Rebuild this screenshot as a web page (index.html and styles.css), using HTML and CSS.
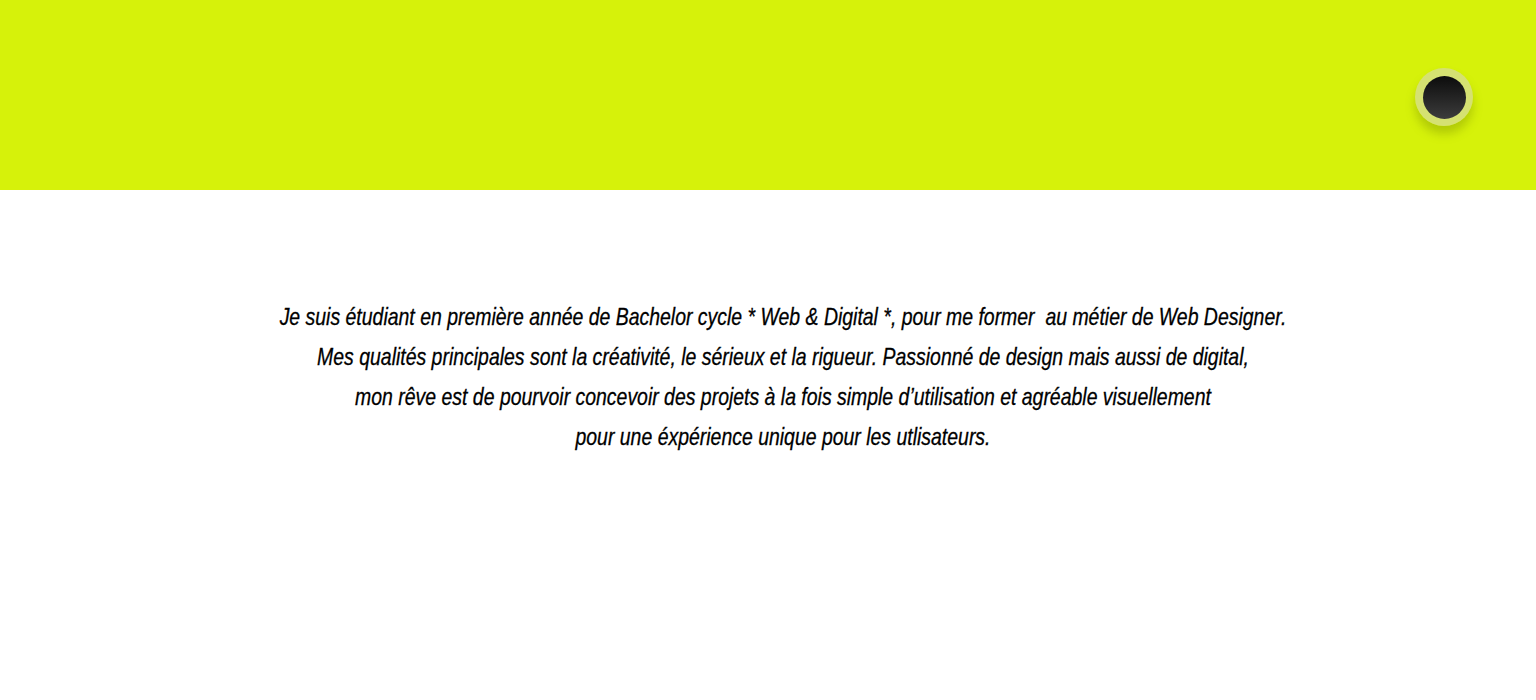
FILE: index.html
```html
<!DOCTYPE html>
<html lang="fr">
<head>
<meta charset="utf-8">
<title>Présentation</title>
<link rel="stylesheet" href="styles.css">
</head>
<body>
<header class="hero">
  <button class="toggle" aria-label="menu"><span class="toggle-core"></span></button>
</header>
<main class="about">
  <p class="intro">
    Je suis étudiant en première année de Bachelor cycle * Web &amp; Digital *, pour me former&nbsp; au métier de Web Designer.<br>
    Mes qualités principales sont la créativité, le sérieux et la rigueur. Passionné de design mais aussi de digital,<br>
    mon rêve est de pourvoir concevoir des projets à la fois simple d’utilisation et agréable visuellement<br>
    pour une éxpérience unique pour les utlisateurs.
  </p>
</main>
</body>
</html>
```

FILE: styles.css
```css
html, body {
  margin: 0;
  padding: 0;
  background: #ffffff;
}
.hero {
  height: 190px;
  background: #d6f20a;
  display: flex;
  justify-content: flex-end;
  align-items: flex-start;
  padding: 68px 63px 0 0;
  box-sizing: border-box;
}
.toggle {
  width: 58px;
  height: 58px;
  border-radius: 50%;
  border: 0;
  padding: 0;
  background: rgba(212, 220, 140, 0.8);
  box-shadow: 0 8px 10px rgba(110, 130, 0, 0.35);
  display: flex;
  align-items: center;
  justify-content: center;
  cursor: pointer;
}
.toggle-core {
  width: 43px;
  height: 43px;
  border-radius: 50%;
  background: linear-gradient(180deg, #0c0c0c 0%, #3c3c3c 100%);
}
.about {
  padding: 107px 0 0 30px;
}
.intro {
  margin: 0;
  text-align: center;
  font-family: "Liberation Sans Narrow", "Arial Narrow", "Liberation Sans", sans-serif;
  font-style: italic;
  font-size: 24px;
  line-height: 40px;
  color: #000;
  -webkit-text-stroke: 0.3px #000;
  transform: scaleX(0.81);
  transform-origin: 50% 0;
}
```
